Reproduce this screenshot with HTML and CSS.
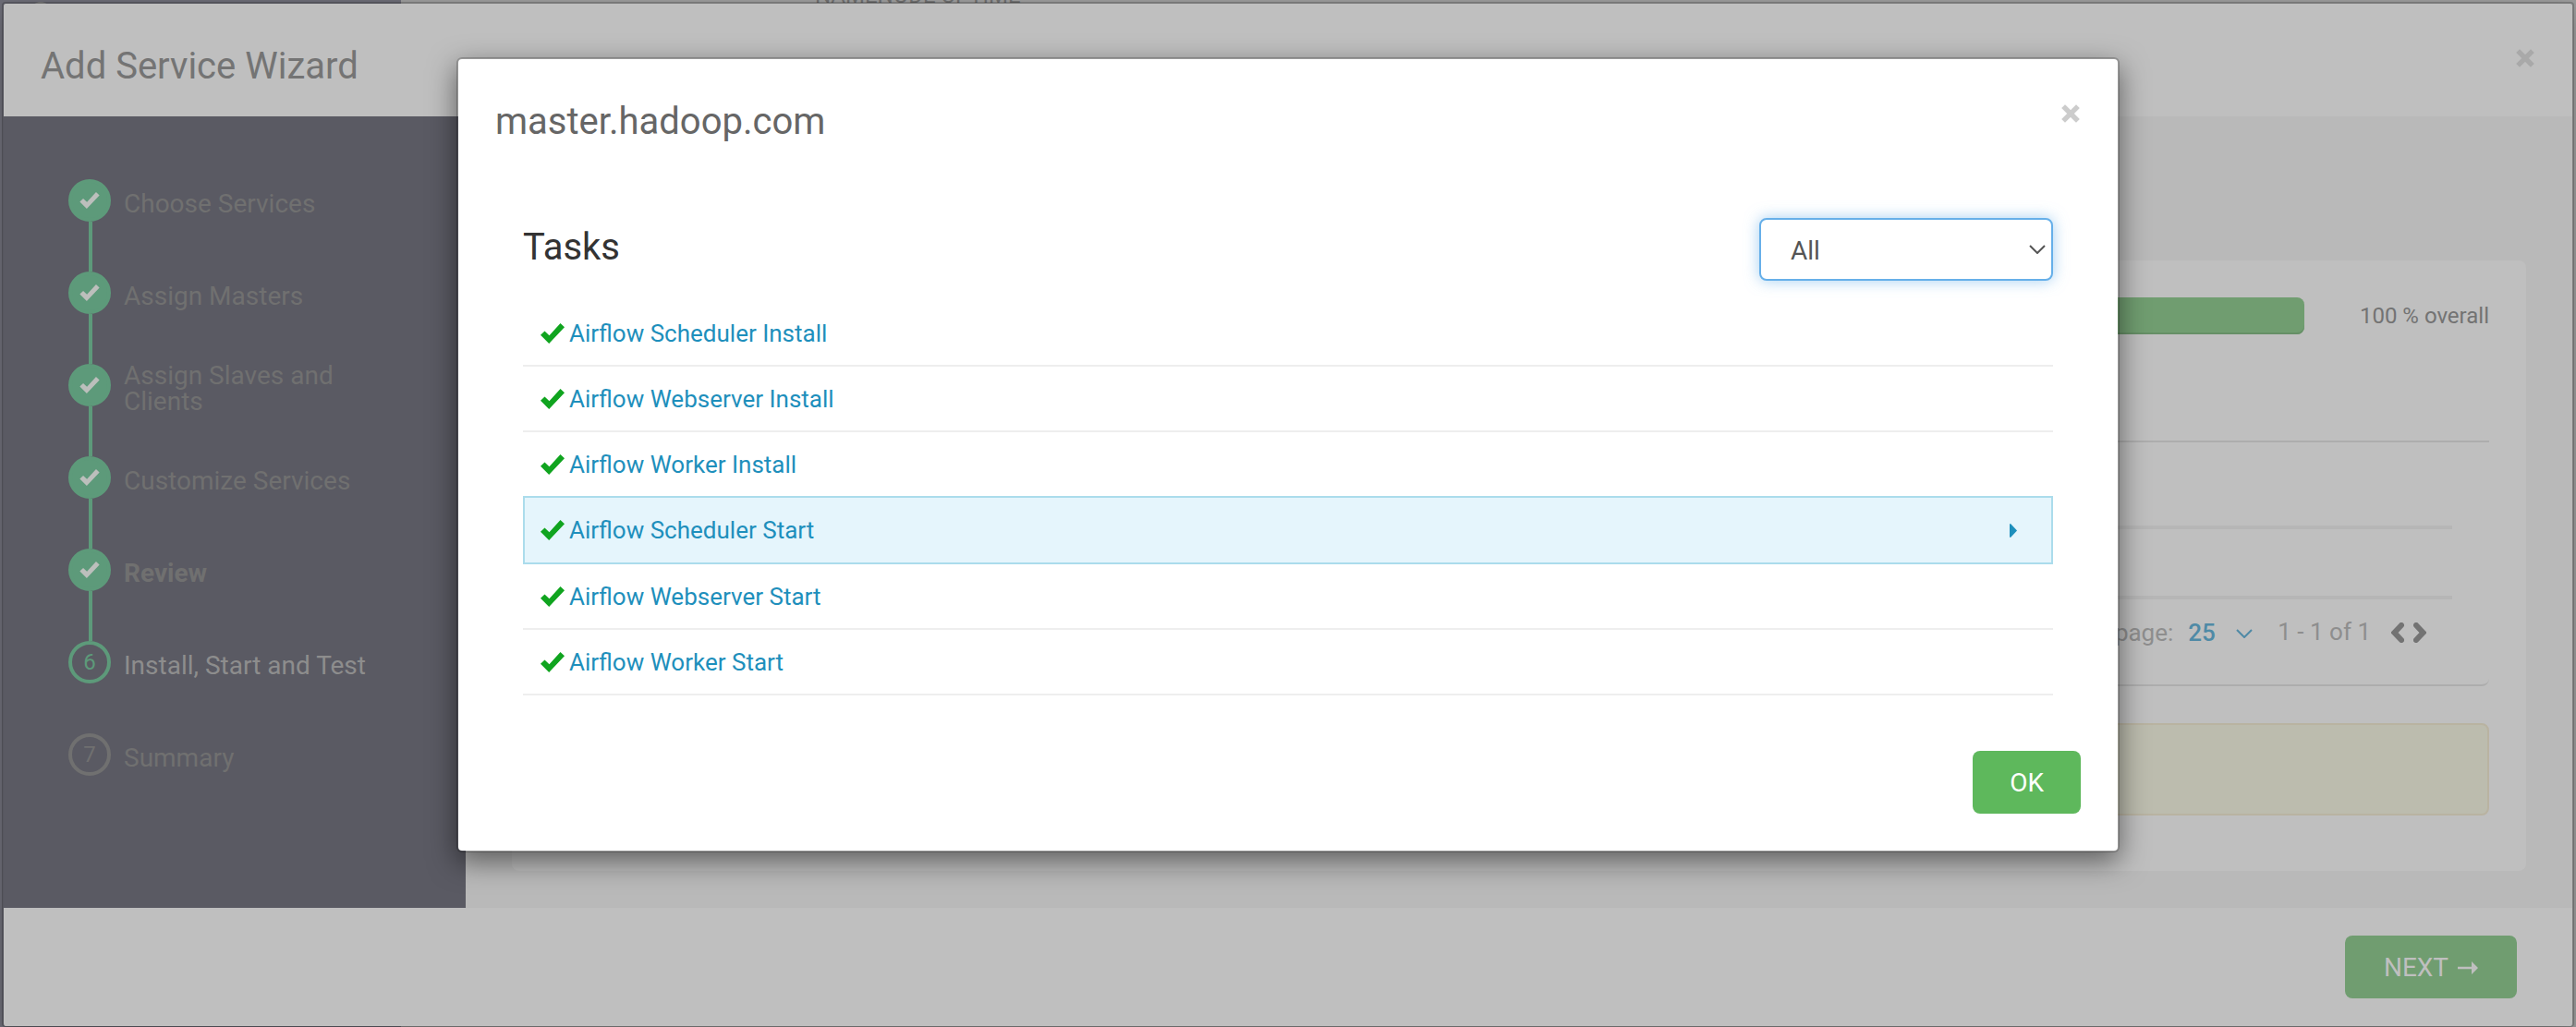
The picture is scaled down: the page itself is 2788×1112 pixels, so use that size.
FILE: index.html
```
<!DOCTYPE html>
<html lang="en">
  <head>
    <meta charset="UTF-8" />
    <meta name="viewport" content="width=device-width, initial-scale=1.0" />
    <title>Add Service Wizard</title>
    <link rel="stylesheet" href="styles.css">
  </head>
  <body>
    <!-- Shared icons -->
    <svg class="sprite" aria-hidden="true">
      <symbol id="check" viewBox="0 0 26 22">
        <path d="M4.5 8.5 9.5 13.2 21.5 0 26 4.2 9.2 22 0 12.8z" />
      </symbol>
      <symbol id="times" viewBox="0 0 20 20">
        <path d="M4 4 16 16M16 4 4 16" fill="none" stroke="currentColor" stroke-width="5.4" stroke-linecap="square" />
      </symbol>
      <symbol id="chevron-down" viewBox="0 0 18 10">
        <path d="M1 1 9 9 17 1" fill="none" stroke="currentColor" stroke-width="2" />
      </symbol>
    </svg>

    <!-- Dashboard behind the wizard -->
    <div class="dashboard">
      <div class="dashboard-nav"><span class="logo"></span></div>
      <div class="widget-title">NAMENODE UPTIME</div>
    </div>

    <!-- Wizard -->
    <div class="wizard">
      <header class="modal-header wizard-header">
        <h2>Add Service Wizard</h2>
        <button class="close" aria-label="Close wizard"><svg><use href="#times" /></svg></button>
      </header>

      <div class="wizard-body">
        <nav class="steps">
          <ol>
            <li class="done"><span class="dot"><svg><use href="#check" /></svg></span><a href="#">Choose Services</a></li>
            <li class="done"><span class="dot"><svg><use href="#check" /></svg></span><a href="#">Assign Masters</a></li>
            <li class="done"><span class="dot"><svg><use href="#check" /></svg></span><a href="#">Assign Slaves and Clients</a></li>
            <li class="done"><span class="dot"><svg><use href="#check" /></svg></span><a href="#">Customize Services</a></li>
            <li class="done review"><span class="dot"><svg><use href="#check" /></svg></span><a href="#">Review</a></li>
            <li class="active"><span class="dot">6</span><a href="#">Install, Start and Test</a></li>
            <li><span class="dot">7</span><a href="#">Summary</a></li>
          </ol>
        </nav>

        <main class="content">
          <section class="card">
            <div class="overall">
              <div class="progress"></div>
              <span class="overall-text">100 % overall</span>
            </div>
            <div class="hosts">
              <div class="host-row host-head"></div>
              <div class="host-row"></div>
              <div class="pagination">
                <label for="page-size">page:</label>
                <span class="page-size">
                  <select id="page-size"><option>25</option></select>
                  <svg><use href="#chevron-down" /></svg>
                </span>
                <span class="range">1 - 1 of 1</span>
                <button class="pager" aria-label="Previous page">
                  <svg viewBox="0 0 14 22"><path d="M11 3 3.5 11 11 19" /></svg>
                </button>
                <button class="pager" aria-label="Next page">
                  <svg viewBox="0 0 14 22"><path d="M3 3 10.5 11 3 19" /></svg>
                </button>
              </div>
            </div>
            <div class="alert"></div>
          </section>
        </main>
      </div>

      <footer class="wizard-footer">
        <button class="btn btn-next">NEXT
          <svg viewBox="0 0 22 14"><path d="M0 5.8H15V0L22 7 15 14V8.2H0z" /></svg>
        </button>
      </footer>
    </div>

    <!-- Host tasks popup -->
    <div class="popup-wrap">
      <div class="popup" role="dialog" aria-labelledby="popup-title">
        <header class="modal-header">
          <h2 id="popup-title">master.hadoop.com</h2>
          <button class="close" aria-label="Close"><svg><use href="#times" /></svg></button>
        </header>

        <div class="popup-body">
          <div class="tasks-head">
            <h3>Tasks</h3>
            <div class="filter">
              <select aria-label="Task status"><option>All</option></select>
              <svg><use href="#chevron-down" /></svg>
            </div>
          </div>
          <ul class="tasks">
            <li><svg class="ok"><use href="#check" /></svg><a href="#">Airflow Scheduler Install</a></li>
            <li><svg class="ok"><use href="#check" /></svg><a href="#">Airflow Webserver Install</a></li>
            <li><svg class="ok"><use href="#check" /></svg><a href="#">Airflow Worker Install</a></li>
            <li class="hovered">
              <svg class="ok"><use href="#check" /></svg><a href="#">Airflow Scheduler Start</a>
              <svg class="caret" viewBox="0 0 8 15"><path d="M0 1Q0 0 1 0L8 7.5 1 15Q0 15 0 14z" /></svg>
            </li>
            <li><svg class="ok"><use href="#check" /></svg><a href="#">Airflow Webserver Start</a></li>
            <li><svg class="ok"><use href="#check" /></svg><a href="#">Airflow Worker Start</a></li>
          </ul>
        </div>

        <footer class="popup-footer">
          <button class="btn">OK</button>
        </footer>
      </div>
    </div>
  </body>
</html>
```

FILE: styles.css
```
/* Global Styles */
* {
  margin: 0;
  padding: 0;
  box-sizing: border-box;
}

body {
  position: relative;
  min-height: 100vh;
  font-family: Roboto, "Liberation Sans", sans-serif;
  font-size: 28px;
  line-height: 40px;
  color: #333;
  background-color: #9c9c9c;
  overflow-x: hidden;
}

button,
select {
  font: inherit;
  color: inherit;
  background: none;
  border: none;
  appearance: none;
}

a {
  color: inherit;
  text-decoration: none;
}

ul,
ol {
  list-style: none;
}

svg {
  display: block;
  fill: currentColor;
}

.sprite {
  position: absolute;
  width: 0;
  height: 0;
}

/* Dashboard behind the wizard */
.dashboard {
  position: absolute;
  inset: 0;
  display: flex;
  overflow: hidden;
}

.dashboard-nav {
  width: 434px;
  padding: 2px 32px;
  background-color: #6d6d77;
}

.logo {
  display: block;
  width: 24px;
  height: 24px;
  border-radius: 50%;
  background-color: #8c8c8c;
}

.widget-title {
  margin: -25px 0 0 448px;
  font-size: 24px;
  color: #6e6e6e;
}

/* Headers */
.modal-header {
  display: flex;
  justify-content: space-between;
  align-items: flex-start;
  height: 122px;
  padding: 42px 40px 28px;
  color: #666;
}

.modal-header h2 {
  font-size: 40px;
  font-weight: 400;
  line-height: 52px;
}

.close {
  padding: 7px 1px;
  color: #ccc;
}

.close svg {
  width: 20px;
  height: 20px;
}

/* Wizard */
.wizard {
  position: relative;
  margin: 2px 2px 0;
  border: 2px solid rgba(0, 0, 0, 0.2);
  border-bottom-width: 1px;
  border-radius: 4px;
  background-color: #bfbfbf;
  background-clip: padding-box;
  box-shadow: 0 10px 30px rgba(0, 0, 0, 0.2);
}

.wizard-header {
  color: #747474;
}

.wizard-header .close {
  color: #a9a9a9;
}

.wizard-body {
  display: flex;
  background-color: #b9b9b9;
}

.steps {
  width: 500px;
  padding: 41px 70px;
  background-color: #5a5a63;
}

.steps li {
  position: relative;
  display: flex;
  align-items: center;
  gap: 14px;
  height: 100px;
  color: #707070;
}

/* Line down to the next step */
.steps .done::after {
  content: "";
  position: absolute;
  left: 22px;
  top: 73px;
  width: 4px;
  height: 54px;
  background-color: #5d9a7a;
}

.steps a {
  flex: 1;
  padding-top: 7px;
  line-height: 28px;
}

.steps .review a {
  font-weight: 700;
}

.steps .active {
  color: #8d8d8d;
}

.dot {
  display: flex;
  justify-content: center;
  align-items: center;
  width: 46px;
  height: 46px;
  border: 4px solid #707070;
  border-radius: 50%;
  font-size: 24px;
}

.done .dot {
  border-color: #5d9a7a;
  background-color: #5d9a7a;
  color: #bcbfbc;
}

.active .dot {
  border-color: #5d9a7a;
  color: #5d9a7a;
}

.dot svg {
  width: 22px;
  height: 18px;
}

.content {
  flex: 1;
  padding: 156px 50px 40px;
}

.card {
  padding: 40px 40px 60px;
  border-radius: 8px;
  background-color: #bfbfbf;
}

.overall {
  display: flex;
  align-items: center;
}

.progress {
  flex: 1;
  height: 40px;
  border-radius: 8px;
  background-color: #709d70;
  box-shadow: inset 0 -2px 0 #668f66;
}

.overall-text {
  width: 200px;
  font-size: 24px;
  text-align: right;
  color: #737373;
}

.hosts {
  margin-top: 115px;
  padding-right: 40px;
  border-top: 2px solid #adadad;
  border-bottom: 2px solid #adadad;
  border-radius: 0 0 8px 8px;
}

.host-row {
  height: 76px;
  border-bottom: 4px solid #b6b6b6;
}

.host-head {
  height: 94px;
}

.pagination {
  display: flex;
  justify-content: flex-end;
  align-items: center;
  height: 92px;
  padding: 0 28px 20px 0;
  font-size: 26px;
  color: #8e8e8e;
}

.page-size {
  position: relative;
  margin-left: 16px;
  color: #4f8aa6;
}

.page-size select {
  width: 72px;
  font-weight: 500;
}

.page-size svg {
  position: absolute;
  right: 2px;
  top: 16px;
  width: 18px;
  height: 10px;
}

.range {
  margin: 0 22px 0 25px;
  padding-bottom: 2px;
}

.pager {
  color: #737373;
}

.pager + .pager {
  margin-left: 10px;
}

.pager svg {
  width: 14px;
  height: 22px;
}

.pager path {
  fill: none;
  stroke: currentColor;
  stroke-width: 6;
  stroke-linecap: round;
}

.alert {
  height: 100px;
  margin-top: 40px;
  border: 2px solid #b9b3a1;
  border-radius: 8px;
  background-color: #bcbcae;
}

.wizard-footer {
  display: flex;
  justify-content: flex-end;
  padding: 30px 60px;
}

/* Buttons */
.btn {
  display: flex;
  align-items: center;
  justify-content: center;
  gap: 10px;
  height: 68px;
  padding: 2px 40px 0;
  border-radius: 8px;
  background-color: #5eb85c;
  color: #fff;
}

.btn-next {
  min-width: 186px;
  background-color: #709d70;
  color: #bfbfbf;
}

.btn-next svg {
  width: 22px;
  height: 14px;
}

/* Host tasks popup */
.popup-wrap {
  position: absolute;
  inset: 0;
  display: flex;
  justify-content: center;
  align-items: flex-start;
  padding-top: 62px;
}

.popup {
  width: 100%;
  max-width: 1800px;
  border: 2px solid rgba(0, 0, 0, 0.2);
  border-radius: 6px;
  background-color: #fff;
  background-clip: padding-box;
  box-shadow: 0 10px 30px rgba(0, 0, 0, 0.5);
}

.popup-body {
  padding: 50px 70px 20px;
}

.tasks-head {
  display: flex;
  justify-content: space-between;
  align-items: flex-start;
  margin-bottom: 22px;
}

.tasks-head h3 {
  font-size: 40px;
  font-weight: 400;
  line-height: 64px;
}

.filter {
  position: relative;
  color: #555;
}

.filter select {
  display: block;
  width: 318px;
  height: 68px;
  padding: 4px 0 0 32px;
  border: 2px solid #66afe9;
  border-radius: 8px;
  background-color: #fff;
  box-shadow: 0 0 16px rgba(102, 175, 233, 0.6);
}

.filter svg {
  position: absolute;
  right: 8px;
  top: 29px;
  width: 18px;
  height: 10px;
}

.tasks li {
  display: flex;
  align-items: center;
  height: 71px;
  padding: 0 19px;
  border-bottom: 2px solid #eee;
  font-size: 26px;
  color: #1e8fbc;
}

.tasks .hovered {
  height: 74px;
  margin-top: -2px;
  padding: 0 37px 0 17px;
  border: 2px solid #abdcec;
  background-color: #e5f5fc;
}

.ok {
  width: 26px;
  height: 22px;
  margin-right: 5px;
  color: #10a41f;
}

.caret {
  width: 8px;
  height: 15px;
  margin-left: auto;
}

.popup-footer {
  display: flex;
  justify-content: flex-end;
  padding: 40px;
}
```
